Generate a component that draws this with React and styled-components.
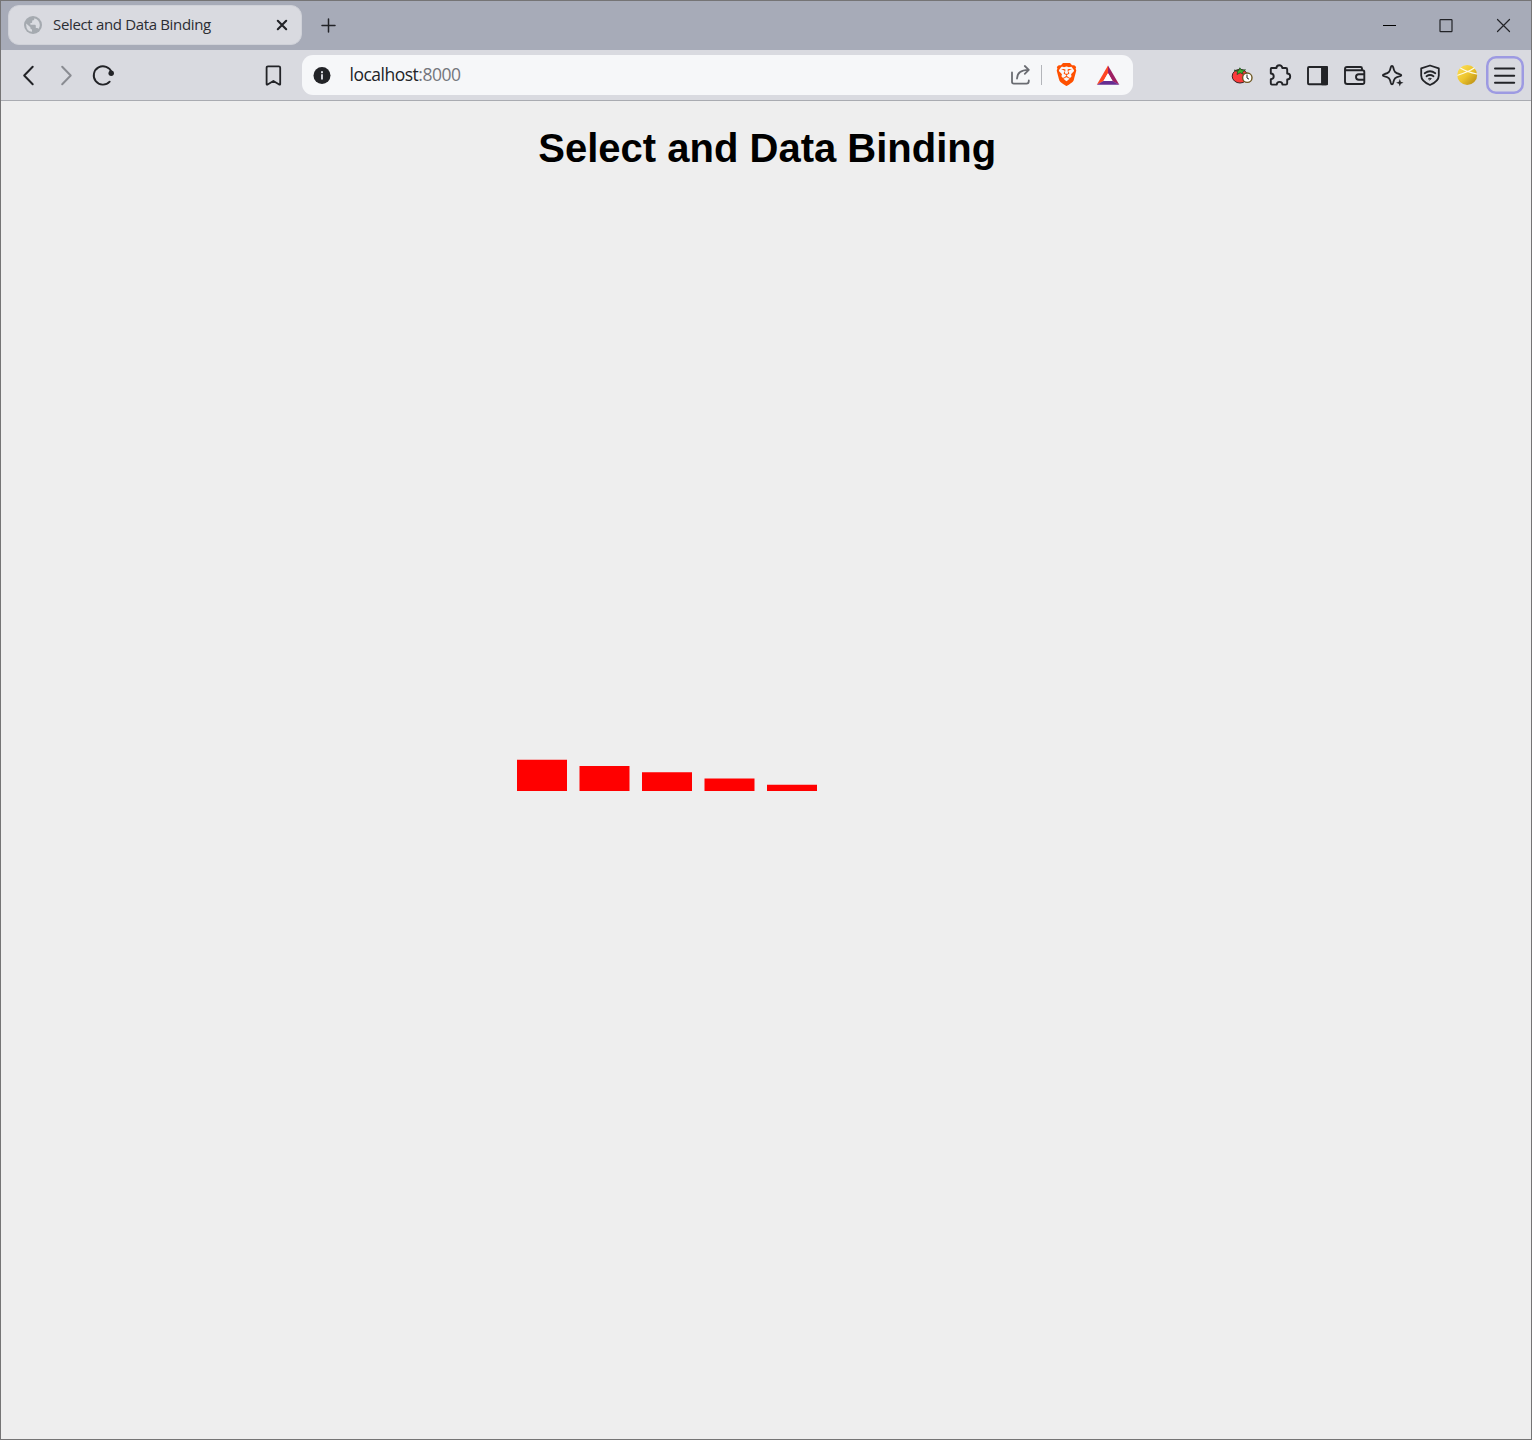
import React from "react";
import styled, { createGlobalStyle } from "styled-components";
import { SiBrave } from "react-icons/si";

const GlobalStyle = createGlobalStyle`
  * { box-sizing: border-box; }
  body { margin: 0; background: #eeeeee; font-family: "Open Sans", "Noto Sans", sans-serif; }
`;

const Window = styled.div`
  width: 1532px;
  height: 1440px;
  display: flex;
  flex-direction: column;
  border: 1px solid #757475;
  background: #eeeeee;
  overflow: hidden;
`;

const TabStrip = styled.header`
  flex: none;
  height: 49px;
  display: flex;
  align-items: flex-start;
  padding: 4px 0 0 7px;
  background: #a7abb8;
`;

const Tab = styled.div`
  width: 294px;
  height: 40px;
  display: flex;
  align-items: center;
  padding: 0 7px 0 13px;
  border-radius: 11px;
  background: #d9dae0;
  border: 1px solid #cfd1d8;
`;

const TabTitle = styled.span`
  flex: 1;
  margin-left: 9px;
  padding-bottom: 2px;
  font-size: 15px;
  line-height: 20px;
  letter-spacing: -0.34px;
  color: #2b2d33;
  white-space: nowrap;
`;

const IconButton = styled.button`
  flex: none;
  width: ${(p) => p.$w || 24}px;
  height: ${(p) => p.$h || 24}px;
  margin: 0 0 0 ${(p) => p.$gap || 0}px;
  padding: 0;
  display: flex;
  align-items: center;
  justify-content: center;
  border: 0;
  background: none;
  color: ${(p) => p.$color || "#222327"};
`;

const MenuButton = styled(IconButton)`
  box-shadow: inset 0 0 0 2.5px #9d9ae2;
  border-radius: 10px;
`;

const WindowControls = styled.div`
  display: flex;
  margin: 8px 0 0 auto;
`;

const Toolbar = styled.nav`
  flex: none;
  height: 51px;
  display: flex;
  align-items: center;
  padding: 0 7.5px 0 15px;
  background: #d9dae0;
  border-bottom: 1px solid #a9abb1;
`;

const AddressBar = styled.div`
  width: 831px;
  height: 40px;
  margin-left: 16px;
  display: flex;
  align-items: center;
  padding: 0 13px 0 8px;
  border-radius: 11px;
  background: #f6f7f9;
`;

const Address = styled.span`
  flex: 1;
  margin-left: 15.5px;
  padding-bottom: 2px;
  font-size: 17.5px;
  line-height: 24px;
  letter-spacing: -0.5px;
  color: #222327;
`;

const Port = styled.span`
  color: #74767c;
`;

const Divider = styled.span`
  width: 1px;
  height: 20px;
  margin-left: 9px;
  background: #b3b5ba;
`;

const Extensions = styled.div`
  display: flex;
  align-items: center;
  margin-left: auto;
`;

const BraveBadge = styled.span`
  flex: none;
  display: flex;
  align-items: center;
  justify-content: center;
  width: 24px;
  height: 24px;
  margin-left: 12px;
  padding-bottom: 2px;
  color: #ff5000;
`;

const Page = styled.main`
  flex: 1;
  display: flex;
  flex-direction: column;
  align-items: center;
`;

const Title = styled.h1`
  margin: 24px 0 0 2.5px;
  font-family: "Liberation Sans", Arial, sans-serif;
  font-size: 40px;
  line-height: 46px;
  font-weight: 700;
  color: #000;
`;

const Chart = styled.svg`
  display: block;
  width: 500px;
  height: 500px;
  margin: 120px 0 0 2px;
`;

function Icon({ size = 24, sw = 1.9, children }) {
  return (
    <svg
      width={size}
      height={size}
      viewBox={`0 0 ${size} ${size}`}
      fill="none"
      stroke="currentColor"
      strokeWidth={sw}
      strokeLinecap="round"
      strokeLinejoin="round"
    >
      {children}
    </svg>
  );
}

const Globe = () => (
  <Icon size={18} sw={0}>
    <circle cx="9" cy="9" r="9" fill="#a5aab0" />
    <path
      d="M2.2 7.6 6.4 11.2V12.3Q6.6 13.4 8 13.4V15.8Q2.2 15.2 2.2 9ZM10.3 2.2V3.2Q10 4.6 8.2 4.6V6.2Q7.9 7.2 6.4 7.1V8.7H10.9Q11.8 8.8 11.8 9.9V12H13.1Q14 12.2 14.4 13.1 15.8 11.4 15.8 9 15.6 3.8 10.3 2.2Z"
      fill="#dadce1"
    />
  </Icon>
);

const Tomato = () => (
  <Icon sw={1}>
    <ellipse cx="10" cy="13.2" rx="7.8" ry="6.8" fill="#fb3b3b" stroke="#3b2325" />
    <path d="M4.5 7.2 8.6 7.5 9.8 4.8 11.6 7 15.5 6.8 12.6 9.1 13.2 11.2 10.2 9.8 7 11.5 7.6 8.9Z" fill="#37b52c" stroke="#213a20" strokeWidth=".7" />
    <circle cx="17.3" cy="14.7" r="4.7" fill="#fff" stroke="#6d5720" strokeWidth="1.4" />
    <path d="M17 12v3l1.7 1" stroke="#222" />
  </Icon>
);

const Puzzle = () => (
  <Icon sw={1.9}>
    <path d="M3.5 5H8.5C8.5 1.3 14.3 1.3 14.3 5H17.8Q19.2 5 19.2 6.4V10.5C23.2 10.5 23.2 16.4 19.2 16.4V20.2Q19.2 21.6 17.8 21.6H14.4C14.4 17.9 8.8 17.9 8.8 21.6H4.2Q2.8 21.6 2.8 20.2V16.2C6.7 16.2 6.7 10.5 2.8 10.5V6Q2.8 5 3.5 5Z" />
  </Icon>
);

const Shield = () => (
  <Icon sw={1.8}>
    <path d="M12 2.5 20.8 5.4V12.5C20.8 17.7 16 20.3 12 22 8 20.3 3.2 17.7 3.2 12.5V5.4Z" />
    <path d="M6.7 10.2Q12 6.3 17.3 10.2M8.5 13.2Q12 10.8 15.5 13.2" />
    <path d="M10.6 15.6Q12 14.7 13.4 15.6L12 16.8Z" fill="currentColor" strokeWidth=".8" />
  </Icon>
);

const Ball = () => (
  <Icon sw={1.2}>
    <defs>
      <linearGradient id="gold" x1="0" y1="0" x2="1" y2="1">
        <stop offset="0" stopColor="#ffe35f" />
        <stop offset=".5" stopColor="#edc52d" />
        <stop offset="1" stopColor="#b18412" />
      </linearGradient>
    </defs>
    <circle cx="12.2" cy="12" r="10" fill="url(#gold)" stroke="none" />
    <path d="M2.7 12.2Q13.2 9 19.2 5M5.7 5.2Q12 8.8 21.9 11" stroke="#fffbe6" />
  </Icon>
);

const bars = [25, 20, 15, 10, 5];

export default function App() {
  return (
    <>
      <GlobalStyle />
      <Window>
        <TabStrip>
          <Tab>
            <IconButton $w={22} as="span"><Globe /></IconButton>
            <TabTitle>Select and Data Binding</TabTitle>
            <IconButton aria-label="Close tab">
              <Icon sw={2.1}><path d="M7.8 7.8 16.2 16.2M16.2 7.8 7.8 16.2" /></Icon>
            </IconButton>
          </Tab>
          <IconButton $h={40} $gap={14} aria-label="New tab">
            <Icon sw={1.5}><path d="M12.5 6v13M6 12.5h13" /></Icon>
          </IconButton>
          <WindowControls>
            <IconButton $w={57} aria-label="Minimize">
              <Icon sw={1}><path d="M6.5 12.5h12" stroke="#000" strokeLinecap="square" /></Icon>
            </IconButton>
            <IconButton $w={57} aria-label="Maximize">
              <Icon sw={1.2}><rect x="6" y="6.7" width="12" height="12" rx=".6" /></Icon>
            </IconButton>
            <IconButton $w={57} aria-label="Close">
              <Icon sw={1.2}><path d="M6.5 6.5 18.5 18.5M18.5 6.5 6.5 18.5" /></Icon>
            </IconButton>
          </WindowControls>
        </TabStrip>

        <Toolbar>
          <IconButton aria-label="Back">
            <Icon sw={2}><path d="M16.7 3.8 8.2 12.5 16.7 21.2" /></Icon>
          </IconButton>
          <IconButton $gap={14} $color="#8a8c92" aria-label="Forward">
            <Icon sw={2}><path d="M8.2 3.8 16.7 12.5 8.2 21.2" /></Icon>
          </IconButton>
          <IconButton $gap={13} aria-label="Reload">
            <Icon>
              <path d="M20.6 9.2A9.2 9.2 0 1 0 18.7 18.7" />
              <circle cx="20.2" cy="10.3" r="2.7" fill="currentColor" stroke="none" />
            </Icon>
          </IconButton>
          <IconButton $gap={147} aria-label="Bookmark">
            <Icon sw={1.8}>
              <path d="M6 3.3H16.8Q18.2 3.3 18.2 4.8V21.1Q18.1 22 17.2 21.6L11.4 18 5.6 21.6Q4.7 22 4.6 21.1V4.8Q4.6 3.3 6 3.3Z" />
            </Icon>
          </IconButton>
          <AddressBar>
            <IconButton as="span">
              <Icon>
                <circle cx="12" cy="12.5" r="8.5" fill="currentColor" stroke="none" />
                <path d="M12 11.3v5.2" stroke="#d9dae0" strokeLinecap="butt" />
                <rect x="11" y="8.2" width="2" height="2" fill="#d9dae0" stroke="none" />
              </Icon>
            </IconButton>
            <Address>localhost<Port>:8000</Port></Address>
            <IconButton $color="#6a6c72" aria-label="Share">
              <Icon sw={1.8}>
                <path d="M4 9.5V18.8Q4 20.6 5.8 20.6H18.5Q20.8 20.6 20.8 18V17.5M9 15.5Q9.2 7 20.5 6.8M16.8 3 20.8 6.8 16.8 10.8" />
              </Icon>
            </IconButton>
            <Divider />
            <BraveBadge><SiBrave size={23} /></BraveBadge>
            <IconButton $gap={18} aria-label="Rewards">
              <Icon sw={0}>
                <path d="M12 2.6 .8 21.7 7.5 18.3 12 10.2Z" fill="#ff4724" />
                <path d="M12 2.6 23.3 21.7 16.5 18.3 12 10.2Z" fill="#9e1f63" />
                <path d="M.8 21.7H23.3L16.5 18H7.5Z" fill="#662d91" />
                <path d="M12 10 7.4 18.1H16.6Z" fill="#fff" />
              </Icon>
            </IconButton>
          </AddressBar>
          <Extensions>
            <IconButton $w={37.5}><Tomato /></IconButton>
            <IconButton $w={37.5}><Puzzle /></IconButton>
            <IconButton $w={37.5}>
              <Icon>
                <rect x="3" y="4" width="19" height="17.3" rx="1" />
                <path d="M17 4h5v17.3H17Z" fill="currentColor" />
              </Icon>
            </IconButton>
            <IconButton $w={37.5}>
              <Icon>
                <path d="M19 7.2V5.5Q19 4 17.5 4H4Q2 4 2 6V18.7Q2 21 4.3 21H19.5Q21.3 21 21.3 19.2V9Q21.3 7.2 19.5 7.2H4Q2.1 7.2 2 5.8M21 11.3H15.8Q13 11.3 13 14 13 16.7 15.8 16.7H21" />
              </Icon>
            </IconButton>
            <IconButton $w={37.5}>
              <Icon sw={1.8}>
                <path d="M12 3Q12.9 3 13.2 4.3C14.1 8.5 15 10 19.3 11 22 11.7 22 12.6 19.3 13.3 15 14.3 14.1 15.7 13.2 19.8 12.7 21.8 11.3 21.8 10.8 19.8 9.9 15.7 9 14.3 4.7 13.3 2.2 12.6 2.2 11.7 4.7 11 9 10 9.9 8.5 10.8 4.3Q11.1 3 12 3Z" />
                <path d="M19.8 16 20.8 18.7 23.5 19.7 20.8 20.7 19.8 23.4 18.8 20.7 16.1 19.7 18.8 18.7Z" fill="currentColor" stroke="#d9dae0" strokeWidth="2.5" paintOrder="stroke" />
              </Icon>
            </IconButton>
            <IconButton $w={37.5}><Shield /></IconButton>
            <IconButton $w={37.5}><Ball /></IconButton>
            <MenuButton $w={37.5} $h={37.5} aria-label="Menu">
              <Icon sw={2}><path d="M2 5.5H21.2M2 12.7H21.2M2 19.8H21.2" /></Icon>
            </MenuButton>
          </Extensions>
        </Toolbar>

        <Page>
          <Title>Select and Data Binding</Title>
          <Chart viewBox="0 0 400 400">
            {bars.map((h, i) => (
              <rect key={h} x={i * 50} y={400 - h} width="40" height={h} fill="#f00" />
            ))}
          </Chart>
        </Page>
      </Window>
    </>
  );
}
